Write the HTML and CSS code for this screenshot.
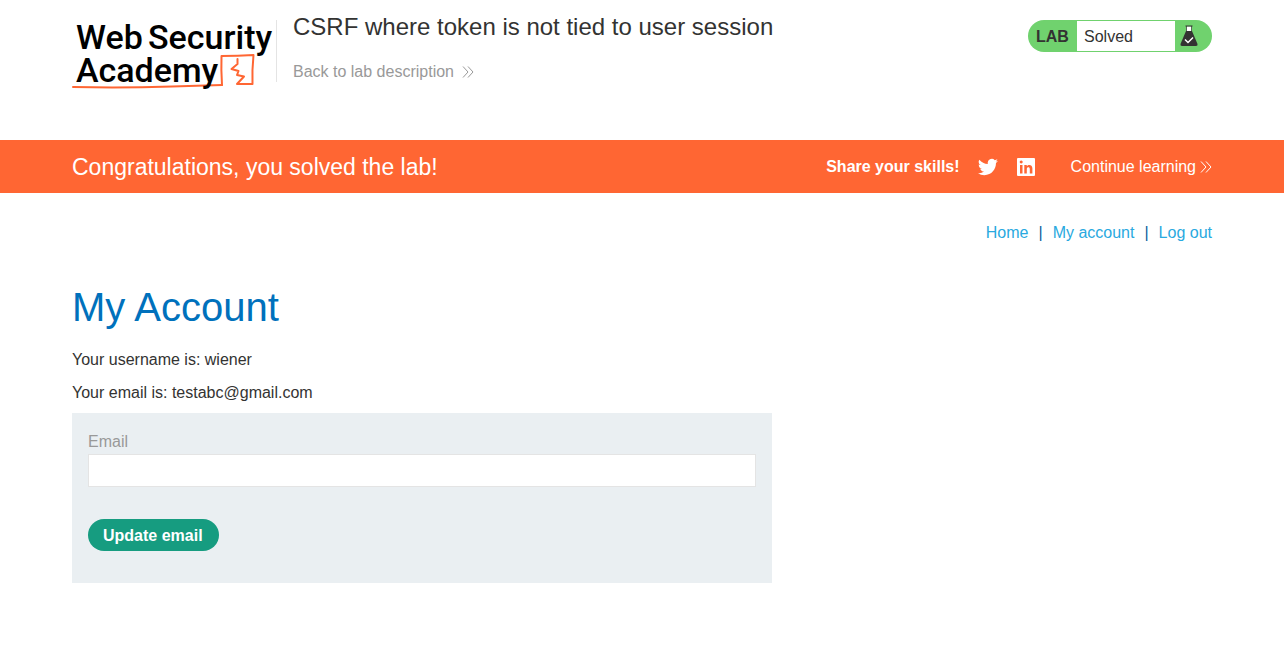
FILE: index.html
```html
<!DOCTYPE html>
<html lang="en">
<head>
<meta charset="utf-8">
<meta name="viewport" content="width=device-width, initial-scale=1">
<title>CSRF where token is not tied to user session</title>
<link rel="stylesheet" href="styles.css">
</head>
<body>
<header class="lab-header container">
  <a class="logo" href="#" aria-label="Web Security Academy">
    <svg class="logo-art" viewBox="0 0 200 72" width="200" height="72">
      <g class="logo-sketch">
        <path class="logo-line" d="M1 69Q50 70 100 68.500T150 67" />
        <path class="logo-box" d="M150 67Q149 52 149.500 38Q166 38 181.500 37Q180 52 180.500 66L165 66L172 58.500L165 57L166.500 53L159.500 51L165.500 46L165.500 41" />
      </g>
      <g class="logo-text">
        <text x="4" y="31">Web</text>
        <text x="76" y="31">Security</text>
        <text x="4" y="64">Academy</text>
      </g>
    </svg>
  </a>
  <div class="title-block">
    <h2 class="lab-title">CSRF where token is not tied to user session</h2>
    <a class="back-link" href="#">Back to lab description
      <svg class="chevrons" viewBox="0 0 12 12" width="12" height="12"><path d="M1 0.500L6 6L1 11.500M6 0.500L11 6L6 11.500"/></svg>
    </a>
  </div>
  <div class="lab-status">
    <span class="status-tag">LAB</span>
    <span class="status-text">Solved</span>
    <svg class="flask" viewBox="0 0 18 22" width="18" height="22">
      <path class="flask-neck" d="M6.500 1.500h5v5h-5z"/>
      <path class="flask-body" d="M5.500 0.500h7v1h-7zM6 1h0.700v6H6zM11.300 1h0.700v6h-0.700zM6 6h6L17.500 19Q18 21 16 21H2Q0 21 0.500 19z"/>
      <path class="flask-tick" d="M5 14.500L8 17.500L13 12.500"/>
    </svg>
  </div>
</header>

<section class="banner">
  <div class="banner-inner container">
    <p class="banner-title">Congratulations, you solved the lab!</p>
    <span class="share-label">Share your skills!</span>
    <a class="social" href="#" aria-label="Twitter">
      <svg viewBox="0 0 24 24" width="20" height="20"><path d="M23.950 4.570a10 10 0 0 1-2.820.770 4.960 4.960 0 0 0 2.160-2.720 9.900 9.900 0 0 1-3.120 1.190 4.920 4.920 0 0 0-8.380 4.480A13.930 13.930 0 0 1 1.640 3.160a4.920 4.920 0 0 0 1.520 6.570 4.900 4.900 0 0 1-2.230-.610v.060a4.920 4.920 0 0 0 3.950 4.830 5 5 0 0 1-2.210.080 4.940 4.940 0 0 0 4.600 3.420A9.870 9.870 0 0 1 0 19.540a13.990 13.990 0 0 0 7.550 2.210c9.050 0 14-7.500 14-13.980l-.020-.640a9.940 9.940 0 0 0 2.420-2.560z"/></svg>
    </a>
    <a class="social" href="#" aria-label="LinkedIn">
      <svg viewBox="0 0 18 18" width="18" height="18"><path fill-rule="evenodd" d="M1 0h16q1 0 1 1v16q0 1-1 1H1q-1 0-1-1V1q0-1 1-1zM3 7v8.500h2.500V7zM4.200 2.600a1.500 1.500 0 1 0 0.010 0zM7.300 7v8.500h2.500v-4.300c0-2.500 3-2.600 3 0v4.300h2.600v-5c0-4-4-4.400-5.600-2.200V7z"/></svg>
    </a>
    <a class="continue-link" href="#">Continue learning
      <svg class="chevrons" viewBox="0 0 12 12" width="12" height="12"><path d="M1 0.500L6 6L1 11.500M6 0.500L11 6L6 11.500"/></svg>
    </a>
  </div>
</section>

<main class="container">
  <nav class="top-links">
    <a href="#">Home</a><span>|</span><a href="#">My account</a><span>|</span><a href="#">Log out</a>
  </nav>
  <h1 class="page-title">My Account</h1>
  <p class="detail">Your username is: wiener</p>
  <p class="detail">Your email is: testabc@gmail.com</p>
  <form class="email-form">
    <label for="email">Email</label>
    <input id="email" type="email" name="email">
    <button type="submit">Update email</button>
  </form>
</main>
</body>
</html>
```
FILE: styles.css
```css
* {
  box-sizing: border-box;
}

body {
  margin: 0;
  color: #333332;
  background: #fff;
  font: 16px/20px "Liberation Sans", Arial, sans-serif;
}

a {
  text-decoration: none;
}

.container {
  max-width: 1284px;
  margin: 0 auto;
  padding: 0 72px;
}

.lab-header {
  display: flex;
  align-items: flex-start;
  padding-bottom: 50px;
}

.logo {
  margin-top: 18px;
}

.logo-art {
  display: block;
  overflow: visible;
}

.logo-text {
  fill: #000;
  font-family: Roboto, sans-serif;
  font-size: 34px;
  font-weight: 500;
}

.logo-sketch {
  fill: none;
  stroke: #ff6633;
  stroke-width: 2;
  stroke-linejoin: round;
  stroke-linecap: round;
}

.title-block {
  flex: 1;
  margin: 20px 0 0 4px;
  padding-left: 16px;
  border-left: 1px solid #e4e4e4;
}

.lab-title {
  margin: -8px 0 16px;
  font-size: 24px;
  line-height: 30px;
  font-weight: 400;
}

.back-link {
  display: flex;
  align-items: center;
  gap: 8px;
  padding: 4px 0 0;
  color: #999;
}

.chevrons {
  fill: none;
  stroke: currentColor;
  stroke-width: 1;
}

.lab-status {
  display: flex;
  align-items: center;
  width: 184px;
  height: 32px;
  margin-top: 20px;
  padding: 1px 14px 1px 8px;
  border-radius: 16px;
  background: #70d26e;
}

.status-tag {
  width: 41px;
  padding-top: 2px;
  font-weight: 700;
}

.status-text {
  flex: 1;
  margin-right: 5px;
  padding: 1px 0 0 7px;
  background: #fff;
  line-height: 29px;
}

.flask-neck {
  fill: #fff;
}

.flask-body {
  fill: #333332;
}

.flask-tick {
  fill: none;
  stroke: #fff;
  stroke-width: 1.5;
}

.banner {
  color: #fff;
  background: #ff6633;
}

.banner-inner {
  display: flex;
  align-items: center;
  min-height: 53px;
}

.banner-title {
  flex: 1;
  margin: 0;
  font-size: 23px;
  line-height: 30px;
}

.share-label {
  margin-right: 18px;
  font-weight: 700;
}

.social {
  display: flex;
  margin-right: 19px;
}

.social svg {
  fill: #fff;
}

.continue-link {
  display: flex;
  align-items: center;
  gap: 4px;
  margin-left: 17px;
  color: #fff;
}

.top-links {
  display: flex;
  justify-content: flex-end;
  gap: 10px;
  padding-top: 30px;
  color: #0b5f9e;
}

.top-links a {
  color: #29a9e0;
}

.page-title {
  margin: 40px 0 19px;
  color: #0071bc;
  font-size: 40px;
  line-height: 48px;
  font-weight: 400;
}

.detail {
  margin: 0 0 13px;
}

.email-form {
  display: flex;
  flex-direction: column;
  align-items: flex-start;
  max-width: 700px;
  margin-top: -3px;
  padding: 19px 16px 32px;
  background: #eaeff2;
}

.email-form label {
  margin-bottom: 2px;
  color: #999;
}

.email-form input {
  width: 100%;
  height: 33px;
  padding: 0 8px;
  border: 1px solid #e4e4e4;
  background: #fff;
  font: inherit;
}

.email-form button {
  height: 32px;
  margin-top: 32px;
  padding: 1px 16px 0 15px;
  border: 0;
  border-radius: 16px;
  color: #fff;
  background: #169c80;
  font: inherit;
  font-weight: 700;
}
```
